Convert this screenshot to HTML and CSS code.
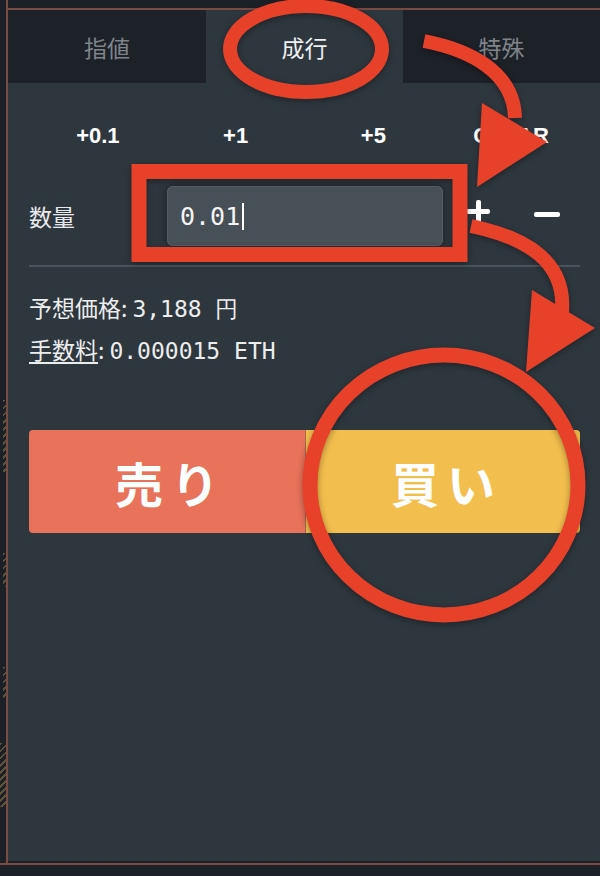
FILE: index.html
```html
<!DOCTYPE html>
<html lang="ja">
  <head>
    <meta charset="UTF-8" />
    <meta name="viewport" content="width=device-width, initial-scale=1.0" />
    <title>成行注文</title>
    <link rel="stylesheet" href="styles.css">
  </head>
  <body>
    <div class="page">
      <div class="main">
        <div class="side">
          <i class="hatch h1"></i>
          <i class="hatch h2"></i>
          <i class="hatch h3"></i>
          <i class="hatch h4"></i>
        </div>
        <div class="frame">
          <div class="panel">
            <div class="tabs">
              <div class="tab">指値</div>
              <div class="tab active">成行</div>
              <div class="tab">特殊</div>
            </div>
            <div class="order">
              <div class="quick">
                <span>+0.1</span>
                <span>+1</span>
                <span>+5</span>
                <span>CLEAR</span>
              </div>
              <div class="qty">
                <div class="qty-label">数量</div>
                <div class="field">0.01<span class="caret"></span></div>
                <div class="step plus"><i></i></div>
                <div class="step minus"><i></i></div>
              </div>
              <div class="sep"></div>
              <p class="info">予想価格:<span class="num">3,188 円</span></p>
              <p class="info"><u>手数料</u>:<span class="num">0.000015 ETH</span></p>
              <div class="trade">
                <div class="sell">売り</div>
                <div class="buy">買い</div>
              </div>
            </div>
          </div>
        </div>
      </div>
      <div class="base"></div>

      <!-- 注釈（赤い丸と矢印） -->
      <svg class="marks" width="600" height="876" viewBox="0 0 600 876">
        <g fill="none" stroke="#e8412a" stroke-width="14">
          <ellipse cx="306" cy="49" rx="76" ry="43" />
          <path d="M424 41 C470 50 514 72 515 118" />
          <rect x="139" y="171.5" width="321" height="83" stroke-width="15" />
          <path d="M471 226 C528 238 566 262 562 312" />
          <ellipse cx="444" cy="485" rx="134" ry="130" stroke-width="15" />
        </g>
        <g fill="#e8412a">
          <polygon points="482,103 547,142 477,187" />
          <polygon points="532,290 595,328 526,372" />
        </g>
      </svg>
    </div>
  </body>
</html>
```

FILE: styles.css
```css
* {
  margin: 0;
  padding: 0;
  box-sizing: border-box;
}
body {
  background-color: #1c2027;
  font-family: "Noto Sans CJK JP", "Noto Sans", sans-serif;
}
.page {
  position: relative;
  width: 600px;
  height: 876px;
  overflow: hidden;
}
.main {
  display: flex;
  height: 863px;
}
.side {
  width: 6px;
  display: flex;
  flex-direction: column;
}
.hatch {
  display: block;
  background: repeating-linear-gradient(135deg, #5e5238 0 2px, transparent 2px 5px);
}
.h1 {
  margin-top: 400px;
  height: 72px;
  margin-left: 3px;
}
.h2 {
  margin-top: 81px;
  height: 34px;
  margin-left: 3px;
}
.h3 {
  margin-top: 80px;
  height: 33px;
  margin-left: 3px;
}
.h4 {
  margin-top: 43px;
  height: 64px;
}
.frame {
  flex: 1;
  border-left: 2px solid #7a4a44;
}
.panel {
  margin-top: 8px;
  height: 853px;
  border-top: 2px solid #7a4a44;
  background-color: #2e373e;
}
.tabs {
  display: grid;
  grid-template-columns: 198px 197px 197px;
  height: 73px;
  background-color: #1d2128;
}
.tab {
  display: flex;
  align-items: center;
  justify-content: center;
  font-size: 23px;
  color: #7f848a;
}
.tab.active {
  background-color: #2e373e;
  color: #eef0f1;
}
.order {
  padding: 0 20px 0 21px;
}
.quick {
  display: grid;
  grid-template-columns: repeat(4, 1fr);
  margin-top: 27px;
  height: 52px;
  line-height: 52px;
  text-align: center;
  font-family: "Liberation Sans", Arial, sans-serif;
  font-weight: bold;
  font-size: 22px;
  color: #fff;
}
.qty {
  display: flex;
  align-items: center;
  margin-top: 24px;
  height: 60px;
}
.qty-label {
  width: 138px;
  font-size: 23px;
  color: #e8e9ea;
}
.field {
  display: flex;
  align-items: center;
  width: 276px;
  height: 60px;
  padding-left: 13px;
  border-radius: 6px;
  background-color: #474f57;
  box-shadow: 0 0 8px rgba(0, 0, 0, 0.45), inset 0 0 0 1px #565e66;
  font-family: "DejaVu Sans Mono", monospace;
  font-size: 25px;
  color: #f4f4f4;
}
.caret {
  width: 2px;
  height: 27px;
  margin-left: 2px;
  background-color: #fff;
}
.step {
  display: flex;
  align-items: center;
  justify-content: center;
  height: 60px;
}
.plus {
  width: 70px;
  padding-bottom: 9px;
}
.minus {
  width: 67px;
  padding-bottom: 3px;
}
.step i {
  position: relative;
  display: block;
  width: 24px;
  height: 5px;
  border-radius: 2px;
  background-color: #fff;
}
.minus i {
  width: 26px;
}
.plus i::after {
  content: "";
  position: absolute;
  left: 9.5px;
  top: -9.5px;
  width: 5px;
  height: 24px;
  border-radius: 2px;
  background-color: #fff;
}
.sep {
  height: 2px;
  margin-top: 19px;
  background-color: #4b545c;
}
.info {
  margin-top: 0;
  height: 42px;
  line-height: 42px;
  font-size: 23px;
  color: #eceded;
}
.sep + .info {
  margin-top: 19px;
}
.info u {
  text-underline-offset: 3px;
}
.num {
  margin-left: 5px;
  font-family: "DejaVu Sans Mono", monospace;
  font-size: 23px;
}
.trade {
  display: flex;
  height: 103px;
  margin-top: 60px;
  border-radius: 4px;
  overflow: hidden;
}
.sell,
.buy {
  display: flex;
  align-items: center;
  justify-content: center;
  padding-left: 8px;
  font-size: 48px;
  font-weight: bold;
  letter-spacing: 8px;
  color: #fff;
}
.sell {
  width: 276px;
  background-color: #e8725a;
}
.buy {
  flex: 1;
  background-color: #f2be4d;
  border-left: 1px solid #a86a4e;
}
.base {
  height: 13px;
  border-top: 2px solid #7a4a44;
}
.marks {
  position: absolute;
  left: 0;
  top: 0;
  pointer-events: none;
  filter: drop-shadow(0 2px 3px rgba(0, 0, 0, 0.35));
}
```
